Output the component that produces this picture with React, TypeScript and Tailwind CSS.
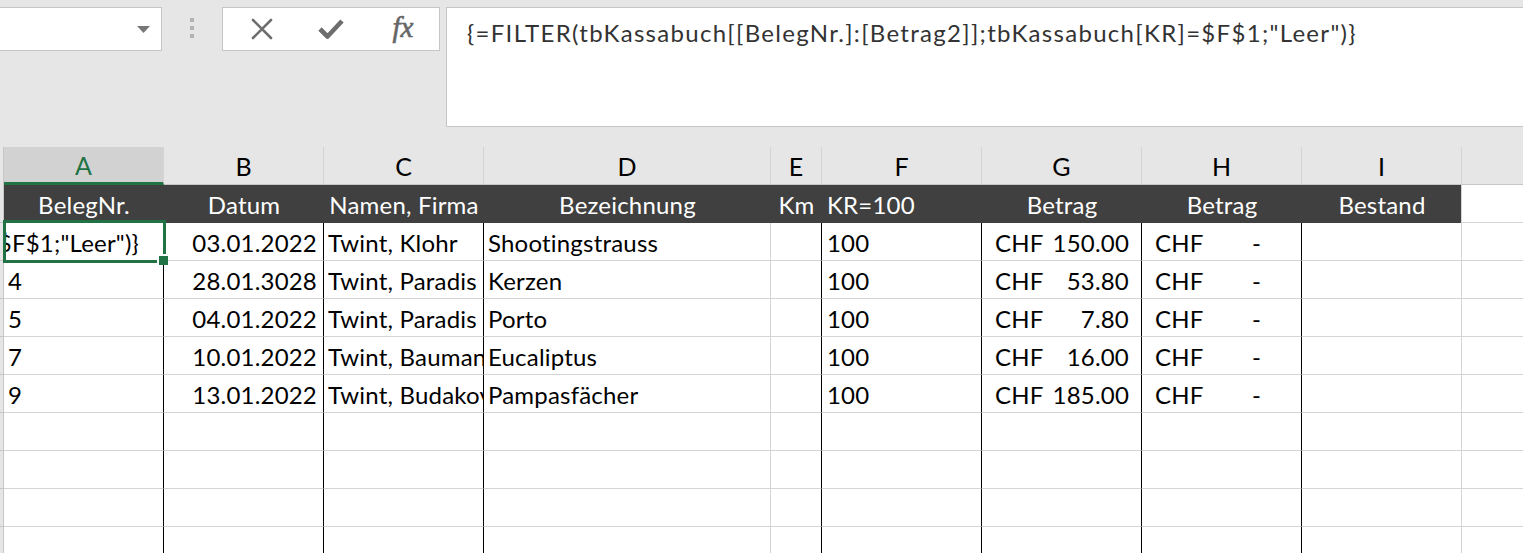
import React from 'react';

type Col = { key: string; w: string; dark: boolean; line: string };

const cols: Col[] = [
  { key: 'A', w: 'w-[160px]', dark: true, line: 'border-black' },
  { key: 'B', w: 'w-[160px]', dark: true, line: 'border-black' },
  { key: 'C', w: 'w-[160px]', dark: true, line: 'border-black' },
  { key: 'D', w: 'w-[287px]', dark: true, line: 'border-[#d4d4d4]' },
  { key: 'E', w: 'w-[51px]', dark: true, line: 'border-black' },
  { key: 'F', w: 'w-[160px]', dark: true, line: 'border-black' },
  { key: 'G', w: 'w-[160px]', dark: true, line: 'border-black' },
  { key: 'H', w: 'w-[160px]', dark: true, line: 'border-black' },
  { key: 'I', w: 'w-[160px]', dark: true, line: 'border-[#d4d4d4]' },
  { key: '', w: 'w-[160px]', dark: false, line: 'border-[#d4d4d4]' },
];

const rows = [
  { nr: '', datum: '03.01.2022', name: 'Twint, Klohr', bez: 'Shootingstrauss', kr: '100', betrag: '150.00' },
  { nr: '4', datum: '28.01.3028', name: 'Twint, Paradis', bez: 'Kerzen', kr: '100', betrag: '53.80' },
  { nr: '5', datum: '04.01.2022', name: 'Twint, Paradis', bez: 'Porto', kr: '100', betrag: '7.80' },
  { nr: '7', datum: '10.01.2022', name: 'Twint, Baumann', bez: 'Eucaliptus', kr: '100', betrag: '16.00' },
  { nr: '9', datum: '13.01.2022', name: 'Twint, Budakov', bez: 'Pampasfächer', kr: '100', betrag: '185.00' },
];

const headers = ['BelegNr.', 'Datum', 'Namen, Firma', 'Bezeichnung', 'Km', 'KR=100', 'Betrag', 'Betrag', 'Bestand', ''];

const Strip = ({ className = '' }: { className?: string }) => (
  <div className={`w-[4px] shrink-0 bg-[#e6e6e6] border-r border-[#c6c6c6] ${className}`} />
);

const Cell = ({ col, children, className = '' }: { col: Col; children?: React.ReactNode; className?: string }) => (
  <div className={`${col.w} shrink-0 h-full border-r border-b border-b-[#d4d4d4] ${col.line} flex items-center pt-[2px] overflow-hidden whitespace-nowrap relative ${className}`}>
    {children}
  </div>
);

function Toolbar() {
  return (
    <div className="h-[147px] bg-[#e6e6e6] flex items-start pt-[7px]">
      {/* name box */}
      <div className="w-[162px] h-[44px] bg-white border border-l-0 border-[#c6c6c6] flex items-center justify-end pr-[11px] shrink-0">
        <svg width="13" height="7" viewBox="0 0 13 7">
          <path d="M0 0 L13 0 L6.5 7 Z" fill="#777777" />
        </svg>
      </div>
      {/* grip */}
      <div className="ml-[28px] mt-[11px] flex flex-col gap-[4px] shrink-0">
        <div className="w-[4px] h-[4px] bg-[#b4b4b4]" />
        <div className="w-[4px] h-[4px] bg-[#b4b4b4]" />
        <div className="w-[4px] h-[4px] bg-[#b4b4b4]" />
      </div>
      {/* cancel / enter / fx */}
      <div className="ml-[28px] w-[218px] h-[44px] bg-white border border-[#c6c6c6] flex items-center shrink-0">
        <div className="w-[76px] flex justify-center pl-[2px]">
          <svg width="24" height="22" viewBox="0 0 24 22">
            <path d="M3 2 L21 20 M21 2 L3 20" stroke="#6e6e6e" strokeWidth="2.6" strokeLinecap="round" />
          </svg>
        </div>
        <div className="w-[64px] flex justify-center">
          <svg width="26" height="22" viewBox="0 0 26 22">
            <path d="M2 11 L9.5 18.5 L24 3" stroke="#6e6e6e" strokeWidth="4.6" fill="none" strokeLinejoin="round" />
          </svg>
        </div>
        <div className="w-[76px] flex justify-center pl-[4px]">
          <span className="font-['Liberation_Serif'] italic text-[29px] leading-none text-[#666666] -mt-[3px] [-webkit-text-stroke:0.6px_#666666]">fx</span>
        </div>
      </div>
      {/* formula box */}
      <div className="ml-[6px] flex-1 h-[120px] bg-white border border-r-0 border-[#c6c6c6] pl-[20px] pt-[7px]">
        <span className="text-[24px] text-[#333333] whitespace-nowrap tracking-[1.3px]">
          {'{=FILTER(tbKassabuch[[BelegNr.]:[Betrag2]];tbKassabuch[KR]=$F$1;"Leer")}'}
        </span>
      </div>
    </div>
  );
}

function ColumnLetters() {
  return (
    <div className="flex h-[38px] bg-[#e6e6e6]">
      <Strip />
      {cols.map((c, i) => (
        <div
          key={i}
          className={`${c.w} shrink-0 h-full border-r border-[#d4d4d4] flex items-center justify-center pt-[2px] text-[25px] ${
            c.key === 'A' ? 'bg-[#d2d2d2] text-[#217346] border-b-[3px] border-b-[#217346]' : 'text-black border-b border-b-[#c6c6c6]'
          }`}
        >
          {c.key}
        </div>
      ))}
    </div>
  );
}

function HeaderRow() {
  return (
    <div className="flex h-[38px]">
      <Strip className="border-b border-b-[#c6c6c6]" />
      {cols.map((c, i) => (
        <div
          key={i}
          className={`${c.w} shrink-0 h-full flex items-center pt-[2px] whitespace-nowrap overflow-hidden text-[24px] tracking-[0.2px] ${
            c.dark ? 'bg-[#404040] text-white' : 'bg-white border-b border-[#d4d4d4] border-l border-l-[#d4d4d4] -ml-[1px]'
          } ${c.key === 'F' ? 'justify-start pl-[5px]' : 'justify-center'}`}
        >
          {headers[i]}
        </div>
      ))}
    </div>
  );
}

function DataRow({ r, first }: { r?: (typeof rows)[number]; first?: boolean }) {
  return (
    <div className="flex h-[38px] text-[24px] tracking-[0.2px] text-black">
      <Strip className="border-b border-b-[#c6c6c6]" />
      <Cell col={cols[0]} className="pl-[4px]">
        {first ? (
          <div className="w-full flex justify-end pr-[24px]">
            <span>{'$F$1;"Leer")}'}</span>
          </div>
        ) : (
          r?.nr
        )}
      </Cell>
      <Cell col={cols[1]} className="justify-end pr-[6px]">{r?.datum}</Cell>
      <Cell col={cols[2]} className="pl-[4px]">{r?.name}</Cell>
      <Cell col={cols[3]} className="pl-[4px]">{r?.bez}</Cell>
      <Cell col={cols[4]} />
      <Cell col={cols[5]} className="pl-[5px]">{r?.kr}</Cell>
      <Cell col={cols[6]} className="justify-between pl-[13px] pr-[12px]">
        {r && (
          <>
            <span>CHF</span>
            <span>{r.betrag}</span>
          </>
        )}
      </Cell>
      <Cell col={cols[7]} className="justify-between pl-[13px] pr-[40px]">
        {r && (
          <>
            <span>CHF</span>
            <span>-</span>
          </>
        )}
      </Cell>
      <Cell col={cols[8]} />
      <Cell col={cols[9]} />
    </div>
  );
}

export default function App() {
  return (
    <div className="w-[1523px] h-[553px] overflow-hidden bg-white font-['Lato'] relative">
      <Toolbar />
      <div className="w-[1621px]">
        <ColumnLetters />
        <HeaderRow />
        <div className="relative">
          {rows.map((r, i) => (
            <DataRow key={i} r={r} first={i === 0} />
          ))}
          {[0, 1, 2, 3].map((i) => (
            <DataRow key={`e${i}`} />
          ))}
          {/* active cell selection */}
          <div className="absolute left-[3px] top-[-3px] w-[163px] h-[43px] border-[3px] border-[#217346] pointer-events-none">
            <div className="absolute right-[-5px] bottom-[-5px] w-[9px] h-[9px] bg-[#217346] border-l-[2px] border-t-[2px] border-white box-content" />
          </div>
        </div>
      </div>
    </div>
  );
}
